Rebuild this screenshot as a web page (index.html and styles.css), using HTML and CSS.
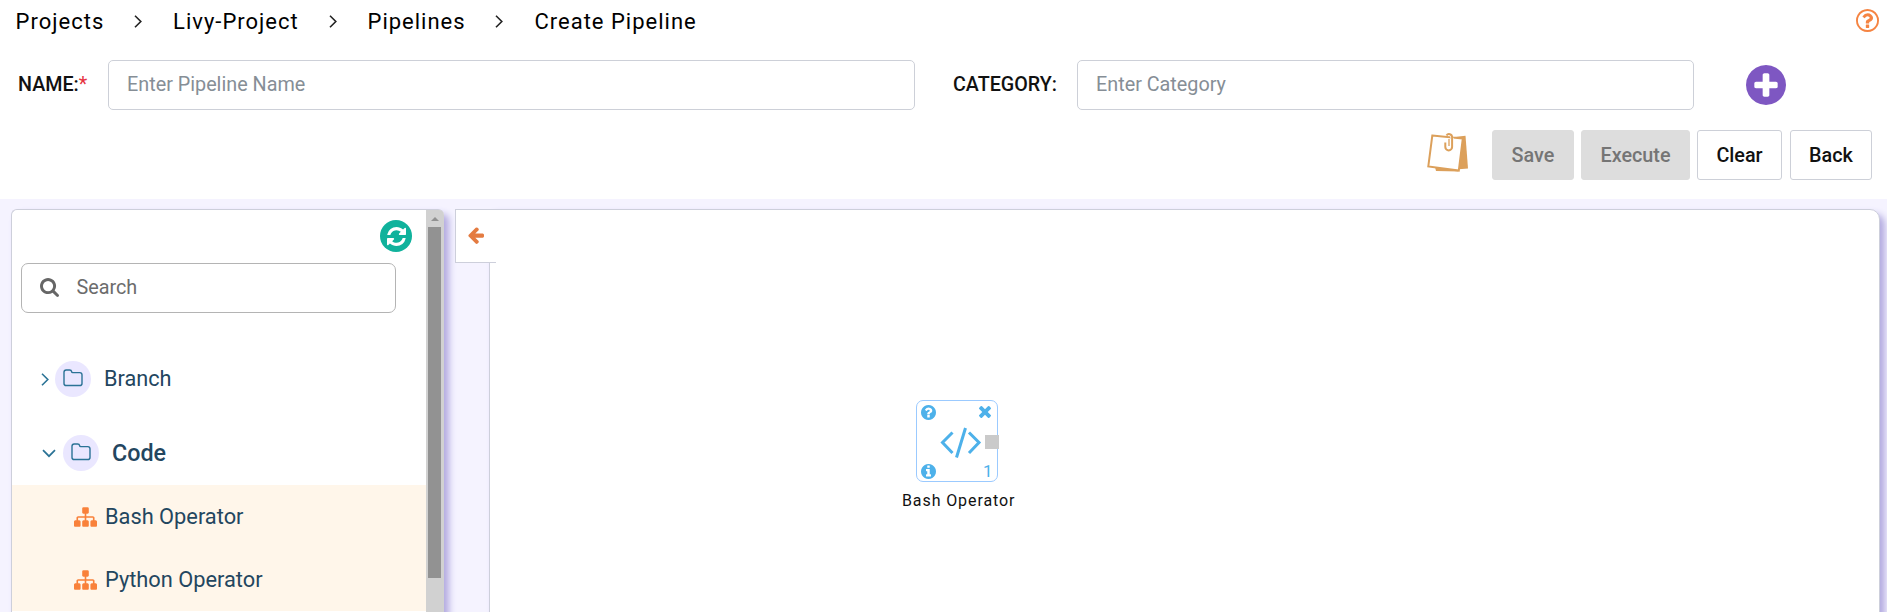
FILE: index.html
```html
<!DOCTYPE html>
<html lang="en">
<head>
<meta charset="utf-8">
<title>Create Pipeline</title>
<link rel="stylesheet" href="styles.css">
</head>
<body>
<svg class="defs" width="0" height="0" aria-hidden="true">
  <symbol id="chevron" viewBox="0 0 8 13"><path d="M1 .8 6.8 6.5 1 12.2" fill="none" stroke="currentColor" stroke-width="1.6"/></symbol>
  <symbol id="question" viewBox="128 128 1536 1536"><path d="M1024 1376v-192q0-14-9-23t-23-9h-192q-14 0-23 9t-9 23v192q0 14 9 23t23 9h192q14 0 23-9t9-23zm256-672q0-88-55.5-163t-138.5-116-170-41q-243 0-371 213-15 24 8 42l132 100q7 6 19 6 16 0 25-12 53-68 86-92 34-24 86-24 48 0 85.5 26t37.5 59q0 38-20 61t-68 45q-63 28-115.5 86.5t-52.5 125.5v36q0 14 9 23t23 9h192q14 0 23-9t9-23q0-19 21.5-49.5t54.5-49.5q32-18 49-28.5t46-35 44.5-48 28-60.5 12.5-81zm384 192q0 209-103 385.5t-279.5 279.5-385.5 103-385.5-103-279.5-279.5-103-385.5 103-385.5 279.5-279.5 385.5-103 385.5 103 279.5 279.5 103 385.5z"/></symbol>
  <symbol id="folder" viewBox="0 0 20 18"><path d="M1 3.2Q1 1 3.2 1H6.600Q8.400 1 8.600 2.600Q8.700 3.600 9.800 3.600H16.800Q19 3.600 19 5.800V14.400Q19 16.500 16.800 16.500H3.200Q1 16.500 1 14.400Z" fill="none" stroke="currentColor" stroke-width="1.400"/></symbol>
  <symbol id="sitemap" viewBox="0 128 1792 1536"><path d="M1792 1248v320q0 40-28 68t-68 28h-320q-40 0-68-28t-28-68v-320q0-40 28-68t68-28h96v-192h-512v192h96q40 0 68 28t28 68v320q0 40-28 68t-68 28h-320q-40 0-68-28t-28-68v-320q0-40 28-68t68-28h96v-192h-512v192h96q40 0 68 28t28 68v320q0 40-28 68t-68 28h-320q-40 0-68-28t-28-68v-320q0-40 28-68t68-28h96v-192q0-52 38-90t90-38h512v-192h-96q-40 0-68-28t-28-68v-320q0-40 28-68t68-28h320q40 0 68 28t28 68v320q0 40-28 68t-68 28h-96v192h512q52 0 90 38t38 90v192h96q40 0 68 28t28 68z"/></symbol>
</svg>

<header class="top">
  <div class="crumb-row">
    <nav class="crumbs">
      <a class="crumb">Projects</a><svg class="sep"><use href="#chevron"/></svg>
      <a class="crumb">Livy-Project</a><svg class="sep"><use href="#chevron"/></svg>
      <a class="crumb">Pipelines</a><svg class="sep"><use href="#chevron"/></svg>
      <a class="crumb">Create Pipeline</a>
    </nav>
    <svg class="help" viewBox="0 0 1536 1536"><path d="M880 1072v160q0 14-9 23t-23 9h-160q-14 0-23-9t-9-23v-160q0-14 9-23t23-9h160q14 0 23 9t9 23zm256-480q0 50-15 90t-45.500 69-52 44-59.500 36q-32 18-46.500 28t-26 24-11.500 29v32q0 14-9 23t-23 9h-160q-14 0-23-9t-9-23v-68q0-35 10.500-64.500t24-47.500 39-35.500 41-25.500 44.500-21q53-25 75-43t22-49q0-42-43.500-71.500t-95.500-29.500q-56 0-95 27-29 20-80 83-9 12-25 12-11 0-19-6l-108-82q-10-7-12-20t5-23q122-192 349-192 129 0 238.500 89.500t109.500 214.500zm-368-464q-130 0-248.500 51t-204 136.500-136.500 204-51 248.500 51 248.500 136.500 204 204 136.500 248.500 51 248.500-51 204-136.500 136.500-204 51-248.500-51-248.500-136.500-204-204-136.500-248.500-51zm768 640q0 209-103 385.500t-279.500 279.500-385.500 103-385.500-103-279.500-279.500-103-385.500 103-385.500 279.500-279.500 385.500-103 385.500 103 279.500 279.500 103 385.500z"/></svg>
  </div>
  <form class="fields">
    <label class="label name-label" for="name">NAME:<span class="req">*</span></label>
    <input class="input name-input" id="name" placeholder="Enter Pipeline Name">
    <label class="label category-label" for="category">CATEGORY:</label>
    <input class="input category-input" id="category" placeholder="Enter Category">
    <svg class="add" viewBox="128 128 1536 1536"><path d="M1344 960v-128q0-26-19-45t-45-19h-256v-256q0-26-19-45t-45-19h-128q-26 0-45 19t-19 45v256h-256q-26 0-45 19t-19 45v128q0 26 19 45t45 19h256v256q0 26 19 45t45 19h128q26 0 45-19t19-45v-256h256q26 0 45-19t19-45zm320-64q0 209-103 385.500t-279.500 279.500-385.500 103-385.500-103-279.500-279.500-103-385.500 103-385.500 279.500-279.500 385.500-103 385.500 103 279.500 279.500 103 385.500z"/></svg>
  </form>
  <div class="actions">
    <svg class="note" viewBox="0 0 42 40">
      <path d="M27 4 38.500 2.800 41 35.600 32 36.300Z" fill="#dca05b"/>
      <path d="M8 34 27 36.500 32 38.600 9 38Z" fill="#dca05b"/>
      <path d="M5.300 2.500 35.800 5.600 31.800 37.600 1.300 33.400Z" fill="#fff" stroke="#dca05b" stroke-width="2"/>
      <path d="M24 3 26.500 8" stroke="#fff" stroke-width="2.500"/>
      <path d="M18.300 9.500V14a3.400 3.400 0 0 0 6.800 0V4A3 3 0 0 0 19.500 2.600" fill="none" stroke="#dca05b" stroke-width="2"/>
      <path d="M22 6V13" fill="none" stroke="#dca05b" stroke-width="1.300"/>
    </svg>
    <button class="btn save" disabled>Save</button>
    <button class="btn execute" disabled>Execute</button>
    <button class="btn clear">Clear</button>
    <button class="btn back">Back</button>
  </div>
</header>

<main class="workspace">
  <aside class="sidebar">
    <div class="library">
      <div class="refresh-row">
        <span class="refresh"><svg viewBox="128 128 1536 1536"><path d="M1639 1056q0 5-1 7-64 268-268 434.500t-478 166.500q-146 0-282.500-55t-243.500-157l-129 129q-19 19-45 19t-45-19-19-45v-448q0-26 19-45t45-19h448q26 0 45 19t19 45-19 45l-137 137q71 66 161 102t187 36q134 0 250-65t186-179q11-17 53-117 8-23 30-23h192q13 0 22.500 9.500t9.500 22.500zm25-800v448q0 26-19 45t-45 19h-448q-26 0-45-19t-19-45 19-45l138-138q-148-137-349-137-134 0-250 65t-186 179q-11 17-53 117-8 23-30 23h-199q-13 0-22.500-9.500t-9.500-22.500v-7q65-268 270-434.500t480-166.500q146 0 284 55.500t245 156.500l130-129q19-19 45-19t45 19 19 45z"/></svg></span>
      </div>
      <div class="search">
        <svg class="search-icon" viewBox="64 128 1664 1664"><path d="M1216 832q0-185-131.500-316.500t-316.500-131.500-316.500 131.500-131.500 316.500 131.500 316.500 316.500 131.500 316.500-131.500 131.500-316.500zm512 832q0 52-38 90t-90 38q-54 0-90-38l-343-342q-179 124-399 124-143 0-273.500-55.500t-225-150-150-225-55.500-273.500 55.500-273.500 150-225 225-150 273.500-55.500 273.500 55.500 225 150 150 225 55.500 273.500q0 220-124 399l343 343q37 37 37 90z"/></svg>
        <input class="search-input" placeholder="Search">
      </div>
      <div class="group">
        <svg class="caret"><use href="#chevron"/></svg>
        <span class="disc"><svg class="folder"><use href="#folder"/></svg></span>
        <span class="group-name">Branch</span>
      </div>
      <div class="group open">
        <svg class="caret" viewBox="0 0 14 9"><path d="M1 1.200 7 7.200 13 1.200" fill="none" stroke="currentColor" stroke-width="1.700"/></svg>
        <span class="disc"><svg class="folder"><use href="#folder"/></svg></span>
        <span class="group-name">Code</span>
      </div>
      <div class="operator"><svg class="sitemap"><use href="#sitemap"/></svg>Bash Operator</div>
      <div class="operator"><svg class="sitemap"><use href="#sitemap"/></svg>Python Operator</div>
    </div>
    <div class="scrollbar">
      <svg class="scroll-up" viewBox="0 0 8 4"><path d="M0 4 4 0 8 4Z"/></svg>
      <div class="thumb"></div>
    </div>
  </aside>
  <section class="canvas">
    <div class="collapse"><svg viewBox="64 160 1600 1570"><path d="M1664 896v128q0 53-32.500 90.500t-84.500 37.500h-704l293 294q38 36 38 90t-38 90l-75 76q-37 37-90 37-52 0-91-37l-651-652q-37-37-37-90 0-52 37-91l651-650q38-38 91-38 52 0 90 38l75 74q38 38 38 91t-38 91l-293 293h704q52 0 84.500 37.500t32.500 90.500z"/></svg></div>
    <div class="node">
      <svg class="badge node-help"><use href="#question"/></svg>
      <svg class="node-close" viewBox="302 366 1188 1188"><path d="M1490 1322q0 40-28 68l-136 136q-28 28-68 28t-68-28l-294-294-294 294q-28 28-68 28t-68-28l-136-136q-28-28-28-68t28-68l294-294-294-294q-28-28-28-68t28-68l136-136q28-28 68-28t68 28l294 294 294-294q28-28 68-28t68 28l136 136q28 28 28 68t-28 68l-294 294 294 294q28 28 28 68z"/></svg>
      <svg class="badge node-info" viewBox="128 128 1536 1536"><path d="M1152 1376v-160q0-14-9-23t-23-9h-96v-512q0-14-9-23t-23-9h-320q-14 0-23 9t-9 23v160q0 14 9 23t23 9h96v320h-96q-14 0-23 9t-9 23v160q0 14 9 23t23 9h448q14 0 23-9t9-23zm-128-896v-160q0-14-9-23t-23-9h-192q-14 0-23 9t-9 23v160q0 14 9 23t23 9h192q14 0 23-9t9-23zm640 416q0 209-103 385.500t-279.500 279.500-385.500 103-385.500-103-279.500-279.500-103-385.500 103-385.500 279.500-279.500 385.500-103 385.500 103 279.500 279.500 103 385.500z"/></svg>
      <svg class="code" viewBox="0 0 42 32"><path d="M12.500 5.500 2.500 15.500 12.500 26M29 5.500 39 15.500 29 26M25.500 1 16.500 30.500" fill="none" stroke="currentColor" stroke-width="3"/></svg>
      <span class="port"></span>
      <span class="count">1</span>
      <span class="node-label">Bash Operator</span>
    </div>
  </section>
</main>
</body>
</html>
```
FILE: styles.css
```css
* { box-sizing: border-box; }
body {
  margin: 0;
  height: 612px;
  overflow: hidden;
  display: flex;
  flex-direction: column;
  background: #f5f3ff;
  font-family: Roboto, "Liberation Sans", sans-serif;
  color: #111;
}
svg { display: block; flex: none; fill: currentColor; }
.defs { position: absolute; }

.top { height: 199px; flex: none; background: #fff; }
.crumb-row { display: flex; justify-content: space-between; height: 60px; padding: 7px 8px 0 15.600px; }
.crumbs { display: flex; height: 29px; align-items: center; }
.crumb { font-size: 22px; line-height: 29px; letter-spacing: 1px; color: #000; white-space: nowrap; }
.sep { width: 8px; height: 13px; margin: 0 31px 0 29.800px; color: #222; }
.help { width: 23px; height: 23px; margin-top: 2px; color: #f58442; }

.fields { display: flex; align-items: center; height: 50px; padding-left: 18px; }
.label { padding-bottom: 1px; font-size: 19.700px; font-weight: 500; flex: none; white-space: nowrap; }
.req { color: #e6323e; font-weight: 400; }
.name-label { width: 90px; }
.category-label { width: 124px; margin-left: 38px; }
.input {
  height: 50px;
  padding: 0 18px 2px;
  border: 1px solid #cdd0d8;
  border-radius: 5px;
  outline: 0;
  background: #fff;
  font: 19.800px Roboto, sans-serif;
}
.input::placeholder { color: #868e96; opacity: 1; }
.name-input { width: 807px; }
.category-input { width: 617px; }
.add { width: 40px; height: 40px; margin: 0 0 1px 52px; color: #7e57c2; }

.actions { display: flex; justify-content: flex-end; padding: 20px 15px 0 0; }
.note { width: 42px; height: 40px; margin: 3px 23px 0 0; }
.btn {
  height: 50px;
  padding: 0;
  border: 1px solid #cdd0d8;
  border-radius: 3px;
  background: #fff;
  font: 500 19.800px Roboto, sans-serif;
  color: #111;
}
.btn:disabled { border-color: #ddd; background: #ddd; color: #757575; }
.save { width: 82px; margin-right: 7px; }
.execute { width: 109px; margin-right: 7px; }
.clear { width: 85px; margin-right: 8px; }
.back { width: 82px; }

.workspace { display: flex; flex: 1; padding: 10px 7px 0 11px; }
.sidebar {
  display: flex;
  width: 433px;
  height: 420px;
  flex: none;
  border: 1px solid #cdcfdb;
  border-right: 0;
  border-radius: 6px 6px 0 0;
  background: #fff;
  box-shadow: 5px 5px 7px #b3abe0;
}
.library { width: 414px; flex: none; }
.refresh-row { display: flex; height: 53px; padding: 10px 0 0 368px; }
.refresh {
  display: grid;
  place-items: center;
  width: 32px;
  height: 32px;
  border-radius: 50%;
  background: #10b29c;
  color: #fff;
}
.refresh svg { width: 19px; height: 19px; }
.search {
  display: flex;
  align-items: center;
  width: 375px;
  height: 50px;
  margin: 0 0 0 9px;
  padding: 0 0 2px 17.500px;
  border: 1px solid #b4b4b4;
  border-radius: 7px;
}
.search-icon { width: 19px; height: 19px; color: #666; }
.search-input { width: 290px; margin-left: 18px; padding: 0; border: 0; outline: 0; background: none; font: 19.800px Roboto, sans-serif; }
.search-input::placeholder { color: #6c6c6c; opacity: 1; }
.group { display: flex; align-items: center; height: 36px; margin-top: 48px; padding-left: 29px; color: #23465f; }
.caret { width: 8px; height: 13px; margin-right: 6px; color: #2b7396; }
.disc { display: grid; place-items: center; width: 36px; height: 36px; border-radius: 50%; background: #eae7ff; color: #2b7396; }
.folder { width: 20px; height: 18px; margin: -3px 1px 0 0; }
.group-name { margin-left: 13px; padding-bottom: 2px; font-size: 21.700px; }
.group.open { margin-top: 38px; margin-bottom: 14px; padding-left: 30px; }
.open .caret { width: 14px; height: 9px; margin-right: 7px; }
.open .group-name { padding-bottom: 0; font-size: 23.300px; font-weight: 500; }
.operator { display: flex; align-items: center; height: 63px; padding-left: 62px; background: #fff6ea; font-size: 21.800px; color: #23465f; }
.sitemap { width: 23px; height: 20px; margin-right: 8px; color: #f9813a; }
.scrollbar { width: 18px; flex: none; background: #d1d1d1; border-radius: 0 5px 0 0; }
.scroll-up { width: 8px; height: 4px; margin: 7px 0 6px 5px; color: #919191; }
.thumb { width: 13px; height: 351px; margin-left: 2px; background: #929292; }

.canvas {
  position: relative;
  width: 1391px;
  height: 420px;
  margin-left: 45px;
  flex: none;
  border: 1px solid #cdcfdb;
  border-radius: 0 10px 0 0;
  background: #fff;
  box-shadow: 5px 5px 7px #b3abe0;
}
.collapse {
  position: absolute;
  left: -35px;
  top: -1px;
  display: flex;
  align-items: center;
  width: 41px;
  height: 54px;
  padding-left: 11px;
  border: 1px solid #cdcfdb;
  border-right: 0;
  background: #fff;
  color: #e47b41;
}
.collapse svg { width: 17px; height: 17px; margin-top: -1px; }
.node {
  position: absolute;
  left: 426px;
  top: 190px;
  width: 82px;
  height: 82px;
  border: 1px solid #9bcaff;
  border-radius: 7px;
  color: #4db1ea;
}
.badge { position: absolute; left: 4px; width: 15px; height: 15px; }
.node-help { top: 3.500px; }
.node-info { top: 62.500px; }
.node-close { position: absolute; left: 62px; top: 4.500px; width: 12px; height: 12px; }
.code { position: absolute; left: 23px; top: 26px; width: 42px; height: 32px; }
.port { position: absolute; left: 68px; top: 34px; width: 14px; height: 14px; background: #cacaca; }
.count { position: absolute; left: 66px; top: 60px; font-size: 17px; line-height: 20px; }
.node-label { position: absolute; left: -15px; top: 90px; font-size: 16px; line-height: 20px; letter-spacing: .9px; color: #111; white-space: nowrap; }
```
